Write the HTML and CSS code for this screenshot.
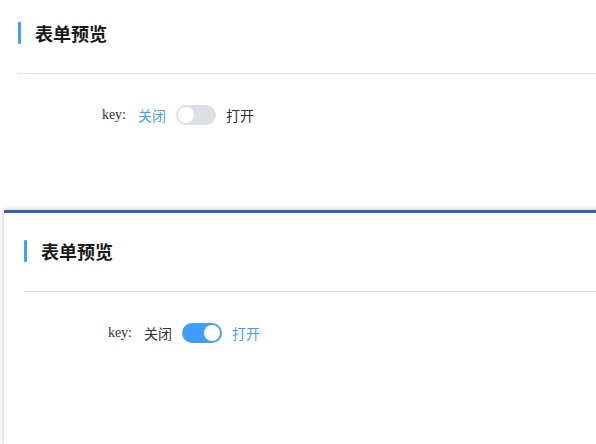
FILE: index.html
```html
<!DOCTYPE html>
<html>

<head>
	<meta charset="utf-8" />
	<title>表单预览</title>
	<meta name="viewport" content="width=device-width, initial-scale=1" />
	<link rel="stylesheet" href="styles.css">
</head>

<body>
	<main class="page">
		<!-- preview: switch off -->
		<section class="panel panel-plain">
			<div class="panel-head">
				<span class="panel-bar"></span>
				<h2 class="panel-title">表单预览</h2>
			</div>
			<div class="panel-body">
				<div class="form-item">
					<label class="form-label">key:</label>
					<div class="form-content">
						<span class="switch-text is-active">关闭</span>
						<span class="switch"><span class="switch-knob"></span></span>
						<span class="switch-text">打开</span>
					</div>
				</div>
			</div>
		</section>

		<!-- preview: switch on -->
		<section class="panel panel-card">
			<div class="panel-head">
				<span class="panel-bar"></span>
				<h2 class="panel-title">表单预览</h2>
			</div>
			<div class="panel-body">
				<div class="form-item">
					<label class="form-label">key:</label>
					<div class="form-content">
						<span class="switch-text">关闭</span>
						<span class="switch is-checked"><span class="switch-knob"></span></span>
						<span class="switch-text is-active">打开</span>
					</div>
				</div>
			</div>
		</section>
	</main>
</body>

</html>
```

FILE: styles.css
```css
* {
	box-sizing: border-box;
}

body {
	margin: 0;
	background: #ffffff;
	color: #303133;
	font-family: "Noto Sans CJK SC", "Noto Sans", sans-serif;
}

.page {
	width: 596px;
	height: 444px;
	overflow: hidden;
}

.panel {
	background: #ffffff;
}

.panel-plain {
	height: 210px;
	padding: 22px 0 0 18px;
}

.panel-card {
	margin-left: 4px;
	width: 600px;
	height: 234px;
	padding: 27px 0 0 20px;
	border-top: 3px solid #3662b4;
	box-shadow: 0 0 5px rgba(0, 0, 0, 0.28);
}

.panel-head {
	display: flex;
	align-items: center;
	height: 22px;
}

.panel-bar {
	width: 3px;
	height: 22px;
	border-radius: 1px;
	background: #409eff;
}

.panel-title {
	margin: 0 0 0 14px;
	font-size: 18px;
	font-weight: bold;
	color: #1a1a1a;
	font-family: "Noto Sans CJK SC", serif;
}

.panel-body {
	margin-top: 29px;
	border-top: 1px solid #dcdfe6;
	padding-top: 31px;
}

.form-item {
	display: flex;
	align-items: center;
	height: 20px;
}

.form-label {
	width: 120px;
	padding-right: 12px;
	text-align: right;
	font-family: "Liberation Serif", serif;
	font-size: 14px;
	color: #303133;
}

.form-content {
	display: flex;
	align-items: center;
	font-size: 14px;
	line-height: 20px;
}

.switch-text {
	color: #303133;
}

.switch-text.is-active {
	color: #409eff;
}

.switch {
	display: flex;
	align-items: center;
	width: 40px;
	height: 20px;
	margin: 0 10px;
	padding: 0 2px;
	border-radius: 10px;
	background: #dcdfe6;
}

.switch.is-checked {
	background: #409eff;
	justify-content: flex-end;
}

.switch-knob {
	width: 16px;
	height: 16px;
	border-radius: 50%;
	background: #ffffff;
}
```
